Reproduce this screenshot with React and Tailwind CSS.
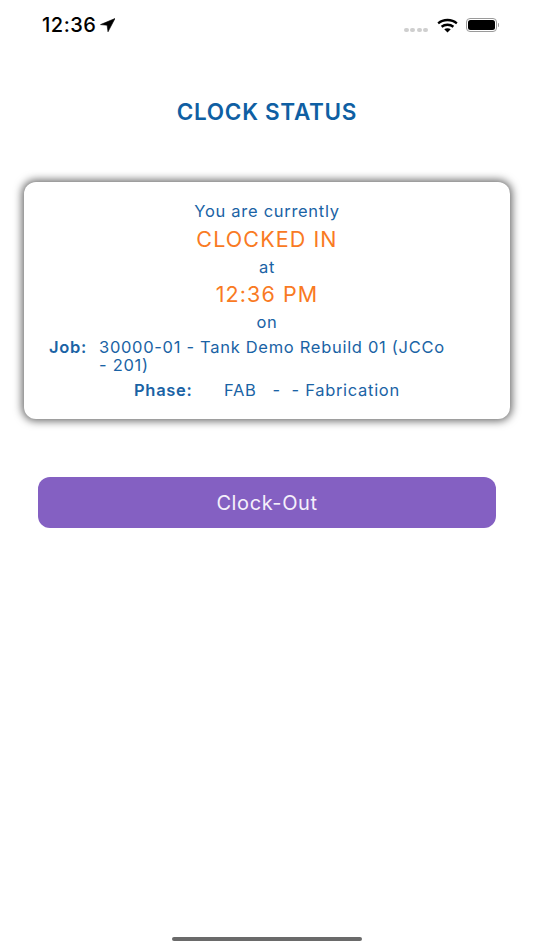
import React from 'react';

const StatusBar = () => (
  <div className="flex h-[50px] items-center justify-between pl-[42px] pr-[35px]">
    <div className="flex items-center gap-[4px]">
      <span className="text-[20px] font-medium leading-none tracking-[0.5px] text-black">12:36</span>
      <svg width="15" height="14" viewBox="0 0 15 14">
        <path d="M15 .5 .5 6.6l6.6.6.9 6.6z" fill="#000" stroke="#000" strokeWidth="0.6" strokeLinejoin="round" />
      </svg>
    </div>
    <div className="flex items-center">
      <div className="mr-[9px] mt-[9px] flex gap-[1.5px]">
        <span className="h-[4px] w-[5px] rounded-full bg-[#cfcfcf]" />
        <span className="h-[4px] w-[5px] rounded-full bg-[#cfcfcf]" />
        <span className="h-[4px] w-[5px] rounded-full bg-[#cfcfcf]" />
        <span className="h-[4px] w-[5px] rounded-full bg-[#cfcfcf]" />
      </div>
      <svg width="21" height="15" viewBox="0 0 22 15" fill="none" stroke="#000" strokeWidth="2.4">
        <path d="M1.2 5.2C6.6.6 15.4.6 20.8 5.2" />
        <path d="M4.8 8.8c3.5-2.8 8.9-2.8 12.4 0" />
        <path d="M11 14.8 7.6 11.3c1.9-1.3 4.9-1.3 6.8 0z" fill="#000" stroke="none" />
      </svg>
      <div className="ml-[8px] flex items-center">
        <div className="flex h-[14px] w-[31px] rounded-[4px] border border-[#9a9a9a] p-[1px]">
          <div className="flex-1 rounded-[2.5px] bg-black" />
        </div>
        <div className="ml-[1px] h-[4px] w-[1px] rounded-r bg-[#9a9a9a]" />
      </div>
    </div>
  </div>
);

const App = () => {
  return (
    <div className="flex h-[950px] w-[534px] flex-col overflow-hidden bg-white font-['Inter',sans-serif]">
      <StatusBar />

      <h1 className="mt-[49px] text-center text-[22.5px] font-semibold leading-[26px] tracking-[0.7px] text-[#0f5fa3]">
        CLOCK STATUS
      </h1>

      <div className="mx-[24px] mt-[57px] flex h-[237px] flex-col rounded-[12px] bg-white pt-[19px] text-[16.5px] tracking-[0.7px] text-[#1a63a5] shadow-[0_0_8px_2px_rgba(0,0,0,0.6)]">
        <p className="text-center leading-[20px]">You are currently</p>
        <p className="mt-[4px] text-center text-[21.5px] leading-[28px] tracking-[1.1px] text-[#f97a23]">CLOCKED IN</p>
        <p className="mt-[4px] text-center leading-[20px]">at</p>
        <p className="mt-[3px] text-center text-[21.5px] leading-[28px] tracking-[1.1px] text-[#f97a23]">12:36 PM</p>
        <p className="mt-[4px] text-center leading-[20px]">on</p>
        <div className="mt-[6px] flex pl-[25px] pr-[56px] leading-[18px]">
          <span className="w-[50px] shrink-0 font-semibold">Job:</span>
          <span>30000-01 - Tank Demo Rebuild 01 (JCCo - 201)</span>
        </div>
        <div className="mt-[6px] flex pl-[110px] leading-[20px]">
          <span className="w-[90px] shrink-0 font-semibold">Phase:</span>
          <span className="whitespace-pre">FAB   -  - Fabrication</span>
        </div>
      </div>

      <button className="mx-[38px] mt-[58px] h-[51px] rounded-[12px] bg-[#8460c2] text-[20px] tracking-[0.6px] text-[#f5f0fb]">
        Clock-Out
      </button>

      <div className="mt-auto mb-[9px] flex justify-center">
        <div className="h-[4px] w-[190px] rounded-full bg-[#6a6a6a]" />
      </div>
    </div>
  );
};

export default App;
